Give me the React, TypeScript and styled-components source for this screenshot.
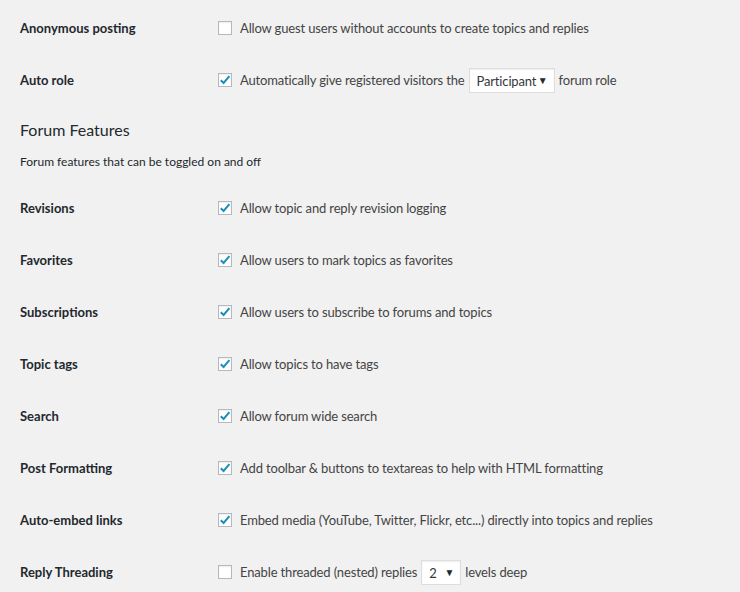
import styled, { createGlobalStyle } from "styled-components";

const GlobalStyle = createGlobalStyle`
  html, body {
    margin: 0;
    padding: 0;
    background: #f1f1f1;
  }
  body {
    font-family: Lato, "Open Sans", sans-serif;
    font-size: 13px;
    letter-spacing: -0.15px;
    color: #444;
  }
`;

const Page = styled.div`
  width: 740px;
  height: 592px;
  overflow: hidden;
  padding: 2px 0 0 20px;
  box-sizing: border-box;
`;

const Row = styled.div`
  display: grid;
  grid-template-columns: 198px 1fr;
  align-items: center;
  height: 52px;
`;

const Label = styled.div`
  color: #23282d;
  font-weight: 700;
  font-size: 13px;
  letter-spacing: 0;
`;

const Field = styled.label`
  display: flex;
  align-items: center;
  color: #444;
  white-space: nowrap;
`;

const Box = styled.span`
  flex: none;
  width: 14px;
  height: 14px;
  box-sizing: border-box;
  border: 1px solid #b4b9be;
  background: #fff;
  box-shadow: inset 0 1px 2px rgba(0, 0, 0, 0.07);
  margin-right: 8px;
  display: flex;
  align-items: center;
  justify-content: center;
`;

const Select = styled.span<{ $w: number }>`
  display: inline-flex;
  align-items: center;
  justify-content: space-between;
  width: ${(p) => p.$w}px;
  height: 25px;
  box-sizing: border-box;
  margin: 0 4px;
  padding: 2px 6px 0 7px;
  background: #fff;
  border: 1px solid #ddd;
  box-shadow: inset 0 1px 2px rgba(0, 0, 0, 0.07);
  color: #32373c;
  font-size: 13px;
`;

const Arrow = styled.span`
  font-size: 10px;
  color: #23282d;
  margin-top: -2px;
`;

const Heading = styled.h2`
  margin: 12px 0 0;
  font-size: 16px;
  line-height: 24px;
  font-weight: 400;
  letter-spacing: 0;
  color: #23282d;
`;

const Description = styled.p`
  margin: 10px 0 10px;
  font-size: 12px;
  line-height: 20px;
  letter-spacing: 0;
  color: #23282d;
`;

const Check = ({ on }: { on: boolean }) => (
  <Box>
    {on && (
      <svg width="12" height="12" viewBox="0 0 12 12">
        <path
          d="M1.8 6.2 L4.6 9 L10.4 2.2"
          fill="none"
          stroke="#1e8cbe"
          strokeWidth="2"
        />
      </svg>
    )}
  </Box>
);

const Dropdown = ({ value, width }: { value: string; width: number }) => (
  <Select $w={width}>
    <span>{value}</span>
    <Arrow>▼</Arrow>
  </Select>
);

const features = [
  { label: "Revisions", text: "Allow topic and reply revision logging" },
  { label: "Favorites", text: "Allow users to mark topics as favorites" },
  { label: "Subscriptions", text: "Allow users to subscribe to forums and topics" },
  { label: "Topic tags", text: "Allow topics to have tags" },
  { label: "Search", text: "Allow forum wide search" },
  { label: "Post Formatting", text: "Add toolbar & buttons to textareas to help with HTML formatting" },
  { label: "Auto-embed links", text: "Embed media (YouTube, Twitter, Flickr, etc...) directly into topics and replies" },
];

export default function App() {
  return (
    <>
      <GlobalStyle />
      <Page>
        <Row>
          <Label>Anonymous posting</Label>
          <Field>
            <Check on={false} />
            Allow guest users without accounts to create topics and replies
          </Field>
        </Row>
        <Row>
          <Label>Auto role</Label>
          <Field>
            <Check on />
            Automatically give registered visitors the
            <Dropdown value="Participant" width={86} />
            forum role
          </Field>
        </Row>

        <Heading>Forum Features</Heading>
        <Description>Forum features that can be toggled on and off</Description>

        {features.map((f) => (
          <Row key={f.label}>
            <Label>{f.label}</Label>
            <Field>
              <Check on />
              {f.text}
            </Field>
          </Row>
        ))}
        <Row>
          <Label>Reply Threading</Label>
          <Field>
            <Check on={false} />
            Enable threaded (nested) replies
            <Dropdown value="2" width={40} />
            levels deep
          </Field>
        </Row>
      </Page>
    </>
  );
}
